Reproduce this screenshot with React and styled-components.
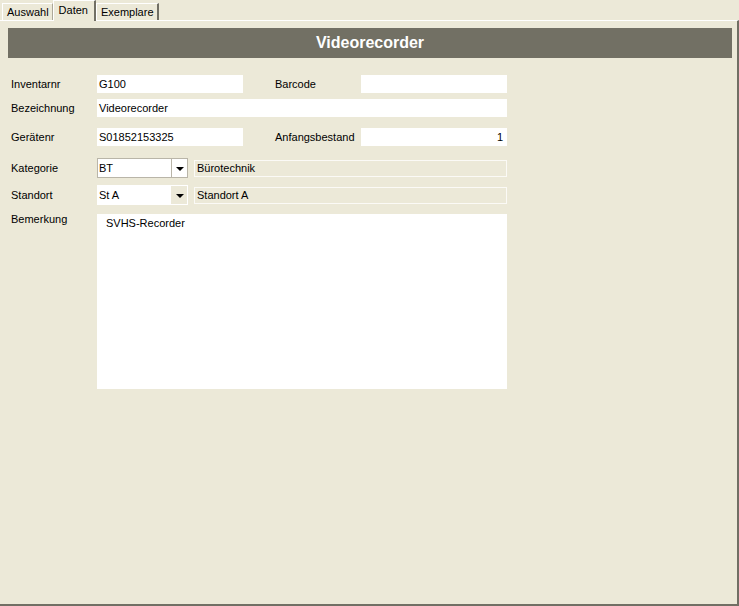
import styled, { createGlobalStyle } from 'styled-components'

const GlobalStyle = createGlobalStyle`
  html, body {
    margin: 0;
    padding: 0;
    background: #ece9d8;
  }
  * {
    box-sizing: border-box;
  }
`;

const Window = styled.div`
  width: 739px;
  height: 606px;
  display: flex;
  flex-direction: column;
  background: #ece9d8;
  font-family: Tahoma, "Liberation Sans", Arial, sans-serif;
  font-size: 11px;
  color: #000;
  overflow: hidden;
`;

const TabStrip = styled.div`
  height: 20px;
  display: flex;
  align-items: flex-end;
  padding-left: 2px;
  position: relative;
  z-index: 1;
`;

const Tab = styled.div`
  height: ${p => (p.$active ? '21px' : '17px')};
  padding: ${p => (p.$active ? '3px 6px 0 5px' : '2px 3px 0 4px')};
  margin-bottom: ${p => (p.$active ? '-1px' : '0')};
  background: #ece9d8;
  border-top: 1px solid #fff;
  border-left: 1px solid #fff;
  border-right: ${p => (p.$edge ? '2px solid #716f64' : '1px solid #aca899')};
  line-height: 13px;
  white-space: nowrap;
`;

const Panel = styled.div`
  flex: 1;
  border-top: 1px solid #fff;
  border-right: 2px solid #716f64;
  border-bottom: 2px solid #716f64;
  padding: 7px 5px 0 8px;
`;

const Header = styled.div`
  height: 30px;
  background: #727064;
  color: #fff;
  font-family: "Liberation Sans", Arial, sans-serif;
  font-weight: bold;
  font-size: 16px;
  display: flex;
  align-items: center;
  justify-content: center;
`;

const Form = styled.div`
  display: grid;
  grid-template-columns: 86px 146px 32px 86px 146px;
  padding-left: 3px;
`;

const Row = styled.div`
  grid-column: 1 / -1;
  display: grid;
  grid-template-columns: subgrid;
  align-items: ${p => (p.$top ? 'start' : 'center')};
  margin-top: ${p => p.$gap}px;
`;

const Label = styled.div`
  margin-top: ${p => (p.$top ? '-1px' : '0')};
  white-space: nowrap;
`;

const Field = styled.div`
  grid-column: ${p => p.$span || 'auto'};
  height: 18px;
  background: #fff;
  padding: 0 4px 0 2px;
  display: flex;
  align-items: center;
  justify-content: ${p => (p.$right ? 'flex-end' : 'flex-start')};
  white-space: nowrap;
`;

const ComboWrap = styled.div`
  grid-column: 2 / 6;
  display: flex;
  align-items: center;
  gap: 6px;
`;

const Combo = styled.div`
  width: 91px;
  height: 20px;
  display: flex;
  border: 1px solid ${p => (p.$framed ? '#b9b5a8' : 'transparent')};
  background: #fff;
`;

const ComboText = styled.div`
  flex: 1;
  padding-left: 1px;
  display: flex;
  align-items: center;
`;

const ComboButton = styled.div`
  width: 16px;
  display: flex;
  align-items: center;
  justify-content: center;
  border-left: 1px solid ${p => (p.$framed ? '#b9b5a8' : 'transparent')};
  background: ${p => (p.$framed ? '#fff' : '#ece9d8')};
`;

const Arrow = styled.div`
  width: 0;
  height: 0;
  border-left: 4px solid transparent;
  border-right: 4px solid transparent;
  border-top: 4px solid #000;
  margin-top: 1px;
`;

const Display = styled.div`
  flex: 1;
  height: 17px;
  border: 1px solid #fbfaf6;
  padding-left: 2px;
  display: flex;
  align-items: center;
`;

const Memo = styled.div`
  grid-column: 2 / 6;
  height: 175px;
  background: #fff;
  padding: 3px 9px;
  line-height: 13px;
`;

function ComboBox({ value, framed }) {
  return (
    <Combo $framed={framed}>
      <ComboText>{value}</ComboText>
      <ComboButton $framed={framed}>
        <Arrow />
      </ComboButton>
    </Combo>
  )
}

export default function App() {
  return (
    <Window>
      <GlobalStyle />
      <TabStrip>
        <Tab>Auswahl</Tab>
        <Tab $active $edge>Daten</Tab>
        <Tab $edge>Exemplare</Tab>
      </TabStrip>
      <Panel>
        <Header>Videorecorder</Header>
        <Form>
          <Row $gap={17}>
            <Label>Inventarnr</Label>
            <Field>G100</Field>
            <span />
            <Label>Barcode</Label>
            <Field />
          </Row>
          <Row $gap={6}>
            <Label>Bezeichnung</Label>
            <Field $span="2 / 6">Videorecorder</Field>
          </Row>
          <Row $gap={11}>
            <Label>Gerätenr</Label>
            <Field>S01852153325</Field>
            <span />
            <Label>Anfangsbestand</Label>
            <Field $right>1</Field>
          </Row>
          <Row $gap={12}>
            <Label>Kategorie</Label>
            <ComboWrap>
              <ComboBox value="BT" framed />
              <Display>Bürotechnik</Display>
            </ComboWrap>
          </Row>
          <Row $gap={7}>
            <Label>Standort</Label>
            <ComboWrap>
              <ComboBox value="St A" />
              <Display>Standort A</Display>
            </ComboWrap>
          </Row>
          <Row $gap={9} $top>
            <Label $top>Bemerkung</Label>
            <Memo>SVHS-Recorder</Memo>
          </Row>
        </Form>
      </Panel>
    </Window>
  )
}
